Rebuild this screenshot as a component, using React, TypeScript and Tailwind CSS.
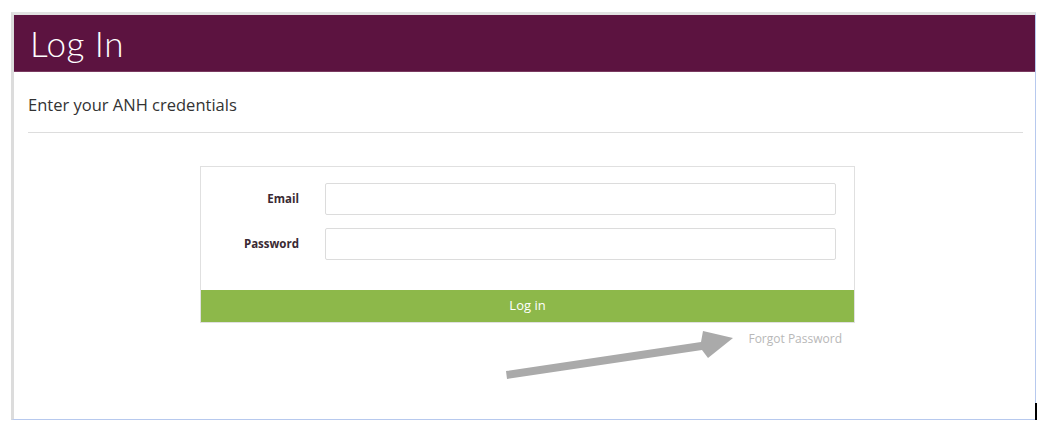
import React from 'react';

const App: React.FC = () => {
  return (
    <div className="w-[1047px] h-[430px] bg-white relative overflow-hidden" style={{ fontFamily: '"Open Sans", "Liberation Sans", sans-serif' }}>
      <div className="absolute left-[1035px] top-[403px] w-[2px] h-[17px] bg-black" />
      <div className="ml-[11px] mt-[12px] w-[1025px] h-[408px] border-l-[3px] border-t-[3px] border-l-[#dcdcdc] border-t-[#e2e2e2] border-r border-b border-r-[#b7c9ee] border-b-[#b7c9ee] flex flex-col">
        {/* header */}
        <div className="h-[57px] bg-[#5c1340] flex items-center pl-[16px] border-b border-[#7a3a60]">
          <h1 className="text-white text-[35px] font-light leading-none tracking-[0.5px]" style={{ fontFamily: 'Lato, Inter, sans-serif' }}>
            Log In
          </h1>
        </div>

        {/* body */}
        <div className="px-[14px] pt-[22px]">
          <p className="text-[16.5px] text-[#333] leading-[22px]">Enter your ANH credentials</p>
          <div className="mt-[16px] h-px bg-[#dddddd] w-[995px]" />

          <div className="ml-[172px] mt-[33px] w-[655px]">
            <div className="border border-[#e0e0e0] pt-[16px]">
              <div className="flex items-center h-[32px]">
                <label className="w-[98px] text-right text-[11.5px] font-bold text-[#3a2a33]">Email</label>
                <input className="ml-[26px] w-[511px] h-[32px] border border-[#dcdcdc] rounded-[2px] outline-none" />
              </div>
              <div className="flex items-center h-[32px] mt-[13px]">
                <label className="w-[98px] text-right text-[11.5px] font-bold text-[#3a2a33]">Password</label>
                <input type="password" className="ml-[26px] w-[511px] h-[32px] border border-[#dcdcdc] rounded-[2px] outline-none" />
              </div>
              <button className="mt-[30px] w-full h-[32px] bg-[#8db84a] text-white text-[13px] flex items-center justify-center">
                Log in
              </button>
            </div>
            <div className="flex justify-end pr-[13px] mt-[7px]">
              <span className="text-[12px] text-[#b8b8b8]">Forgot Password</span>
            </div>
          </div>
        </div>
      </div>

      {/* annotation arrow */}
      <svg className="absolute left-0 top-0" width="1047" height="430">
        <polygon points="506,371 701,342 703,331 733,338 708,358 702,350 507,379" fill="#aaaaaa" />
      </svg>
    </div>
  );
};

export default App;
